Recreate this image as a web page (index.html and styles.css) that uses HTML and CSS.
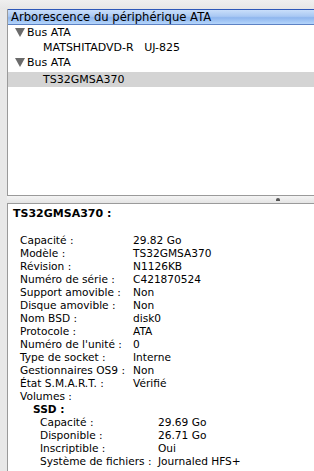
FILE: index.html
```html
<!DOCTYPE html>
<html lang="fr">
<head>
<meta charset="utf-8">
<link rel="stylesheet" href="styles.css">
</head>
<body>
<div class="window">
  <div class="top-strip"></div>
  <div class="tree-pane">
    <div class="tree-header">Arborescence du périphérique ATA</div>
    <ul class="tree">
      <li class="row bus"><span class="disclosure"></span>Bus ATA</li>
      <li class="row item">MATSHITADVD-R&nbsp;&nbsp;&nbsp;UJ-825</li>
      <li class="row bus"><span class="disclosure"></span>Bus ATA</li>
      <li class="row item selected">TS32GMSA370</li>
    </ul>
  </div>
  <div class="splitter"><span class="dimple"></span></div>
  <div class="detail-pane">
    <span class="side-mark"></span>
    <div class="detail-title">TS32GMSA370 :</div>
    <dl class="props">
      <dt>Capacité :</dt><dd>29.82 Go</dd>
      <dt>Modèle :</dt><dd>TS32GMSA370</dd>
      <dt>Révision :</dt><dd>N1126KB</dd>
      <dt>Numéro de série :</dt><dd>C421870524</dd>
      <dt>Support amovible :</dt><dd>Non</dd>
      <dt>Disque amovible :</dt><dd>Non</dd>
      <dt>Nom BSD :</dt><dd>disk0</dd>
      <dt>Protocole :</dt><dd>ATA</dd>
      <dt>Numéro de l'unité :</dt><dd>0</dd>
      <dt>Type de socket :</dt><dd>Interne</dd>
      <dt>Gestionnaires OS9 :</dt><dd>Non</dd>
      <dt>État S.M.A.R.T. :</dt><dd>Vérifié</dd>
    </dl>
    <div class="volumes">Volumes :</div>
    <div class="volume-name">SSD :</div>
    <dl class="props sub">
      <dt>Capacité :</dt><dd>29.69 Go</dd>
      <dt>Disponible :</dt><dd>26.71 Go</dd>
      <dt>Inscriptible :</dt><dd>Oui</dd>
      <dt>Système de fichiers :</dt><dd>Journaled HFS+</dd>
    </dl>
  </div>
</div>
</body>
</html>
```

FILE: styles.css
```css
html, body {
  margin: 0;
  padding: 0;
  height: 100%;
  overflow: hidden;
}
body {
  background: #e8e8e8;
  font-family: "DejaVu Sans", "Liberation Sans", sans-serif;
  font-size: 11px;
  color: #000;
}
.window {
  display: flex;
  flex-direction: column;
  height: 100%;
  padding-left: 7px;
}
.top-strip {
  flex-shrink: 0;
  height: 9px;
  background: linear-gradient(#efefef, #e6e6e6);
  margin-left: -7px;
}
.tree-pane {
  flex-shrink: 0;
  height: 187px;
  background: #fff;
  border-left: 1px solid #9a9a9a;
  border-bottom: 1px solid #9a9a9a;
  box-sizing: border-box;
  display: flex;
  flex-direction: column;
}
.tree-header {
  height: 14px;
  line-height: 14px;
  padding-left: 3px;
  font-size: 11.6px;
  border-top: 1px solid #2d57b8;
  border-bottom: 1px solid #5d82c4;
  background: linear-gradient(#c9defa 0%, #a9c8f3 45%, #8fb6ee 55%, #b4d5fb 100%);
}
.tree {
  list-style: none;
  margin: 0;
  padding: 0;
}
.row {
  height: 15px;
  line-height: 15px;
  white-space: nowrap;
}
.row.bus {
  padding-left: 7px;
  display: flex;
  align-items: center;
}
.row.item {
  padding-left: 35px;
}
.row.selected {
  margin-top: 2px;
  background: #d4d4d4;
}
.disclosure {
  width: 0;
  height: 0;
  border-left: 5px solid transparent;
  border-right: 5px solid transparent;
  border-top: 9px solid #6b6b6b;
  margin-right: 2px;
}
.splitter {
  flex-shrink: 0;
  height: 7px;
  position: relative;
  background: linear-gradient(#f4f4f4, #e4e4e4);
  border-bottom: 1px solid #9a9a9a;
}
.dimple {
  position: absolute;
  left: 269px;
  top: 2px;
  width: 4px;
  height: 3px;
  background: #555;
  border-radius: 2px 2px 0 0;
}
.detail-pane {
  flex: 1;
  min-height: 0;
  overflow: hidden;
  background: #fff;
  border-left: 1px solid #9a9a9a;
  padding: 3px 0 0 5px;
  position: relative;
  font-size: 10.6px;
}
.side-mark {
  position: absolute;
  left: -8px;
  top: 38px;
  width: 4px;
  height: 3px;
  background: #666;
  border-radius: 2px 2px 0 0;
}
.detail-title {
  font-weight: bold;
  line-height: 13px;
  height: 13px;
  font-size: 11px;
}
.props {
  display: grid;
  grid-template-columns: 113px auto;
  margin: 14px 0 0 7px;
  line-height: 13px;
}
.props dt, .props dd {
  margin: 0;
  white-space: nowrap;
}
.volumes {
  margin-left: 7px;
  line-height: 13px;
}
.volume-name {
  margin-left: 20px;
  font-weight: bold;
  line-height: 13px;
}
.props.sub {
  margin: 0 0 0 27px;
  grid-template-columns: 118px auto;
}
```
